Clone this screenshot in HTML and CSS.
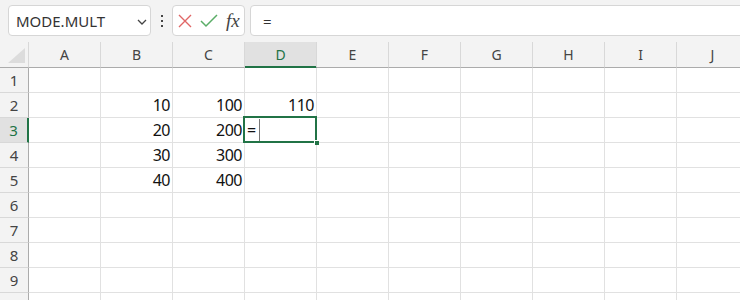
FILE: index.html
```html
<!DOCTYPE html>
<html lang="en">
  <head>
    <meta charset="UTF-8" />
    <title>Sheet</title>
    <link rel="stylesheet" href="styles.css">
  </head>
  <body>
    <div class="toolbar">
      <div class="namebox">
        <span>MODE.MULT</span>
        <svg class="chev" width="10" height="6" viewBox="0 0 10 6">
          <polyline points="1,1 5,5 9,1" fill="none" stroke="#444" stroke-width="1.3" />
        </svg>
      </div>
      <div class="dots">
        <svg width="4" height="12" viewBox="0 0 4 12">
          <rect x="1" y="0" width="2" height="2" fill="#444" />
          <rect x="1" y="5" width="2" height="2" fill="#444" />
          <rect x="1" y="10" width="2" height="2" fill="#444" />
        </svg>
      </div>
      <div class="fxbox">
        <svg width="14" height="14" viewBox="0 0 14 14">
          <path d="M1 1 L13 13 M13 1 L1 13" stroke="#e06666" stroke-width="1.4" fill="none" />
        </svg>
        <svg width="18" height="14" viewBox="0 0 18 14">
          <polyline points="1,7 6,12 17,1" stroke="#5aad67" stroke-width="1.5" fill="none" />
        </svg>
        <span class="fx">fx</span>
      </div>
      <div class="formula">=</div>
    </div>

    <div class="sheet">
      <div class="row head">
        <div class="corner"></div>
        <div class="ch">A</div>
        <div class="ch">B</div>
        <div class="ch">C</div>
        <div class="ch sel">D</div>
        <div class="ch">E</div>
        <div class="ch">F</div>
        <div class="ch">G</div>
        <div class="ch">H</div>
        <div class="ch">I</div>
        <div class="ch">J</div>
      </div>
      <div class="row">
        <div class="rh">1</div>
        <div class="c"></div><div class="c"></div><div class="c"></div><div class="c"></div><div class="c"></div>
        <div class="c"></div><div class="c"></div><div class="c"></div><div class="c"></div><div class="c"></div>
      </div>
      <div class="row">
        <div class="rh">2</div>
        <div class="c"></div><div class="c">10</div><div class="c">100</div><div class="c">110</div><div class="c"></div>
        <div class="c"></div><div class="c"></div><div class="c"></div><div class="c"></div><div class="c"></div>
      </div>
      <div class="row">
        <div class="rh sel">3</div>
        <div class="c"></div><div class="c">20</div><div class="c">200</div>
        <div class="c active"><span class="edit">=</span><span class="caret"></span><span class="handle"></span></div>
        <div class="c"></div>
        <div class="c"></div><div class="c"></div><div class="c"></div><div class="c"></div><div class="c"></div>
      </div>
      <div class="row">
        <div class="rh">4</div>
        <div class="c"></div><div class="c">30</div><div class="c">300</div><div class="c"></div><div class="c"></div>
        <div class="c"></div><div class="c"></div><div class="c"></div><div class="c"></div><div class="c"></div>
      </div>
      <div class="row">
        <div class="rh">5</div>
        <div class="c"></div><div class="c">40</div><div class="c">400</div><div class="c"></div><div class="c"></div>
        <div class="c"></div><div class="c"></div><div class="c"></div><div class="c"></div><div class="c"></div>
      </div>
      <div class="row">
        <div class="rh">6</div>
        <div class="c"></div><div class="c"></div><div class="c"></div><div class="c"></div><div class="c"></div>
        <div class="c"></div><div class="c"></div><div class="c"></div><div class="c"></div><div class="c"></div>
      </div>
      <div class="row">
        <div class="rh">7</div>
        <div class="c"></div><div class="c"></div><div class="c"></div><div class="c"></div><div class="c"></div>
        <div class="c"></div><div class="c"></div><div class="c"></div><div class="c"></div><div class="c"></div>
      </div>
      <div class="row">
        <div class="rh">8</div>
        <div class="c"></div><div class="c"></div><div class="c"></div><div class="c"></div><div class="c"></div>
        <div class="c"></div><div class="c"></div><div class="c"></div><div class="c"></div><div class="c"></div>
      </div>
      <div class="row">
        <div class="rh">9</div>
        <div class="c"></div><div class="c"></div><div class="c"></div><div class="c"></div><div class="c"></div>
        <div class="c"></div><div class="c"></div><div class="c"></div><div class="c"></div><div class="c"></div>
      </div>
      <div class="row">
        <div class="rh">10</div>
        <div class="c"></div><div class="c"></div><div class="c"></div><div class="c"></div><div class="c"></div>
        <div class="c"></div><div class="c"></div><div class="c"></div><div class="c"></div><div class="c"></div>
      </div>
    </div>
  </body>
</html>
```

FILE: styles.css
```css
body {
  margin: 0;
  padding: 0;
  width: 740px;
  height: 300px;
  overflow: hidden;
  background-color: #f3f3f3;
  font-family: "Noto Sans", sans-serif;
  color: #222;
}

.toolbar {
  display: flex;
  align-items: flex-start;
  height: 42px;
  padding: 5px 0 0 8px;
  box-sizing: border-box;
}

.namebox {
  width: 143px;
  height: 31px;
  box-sizing: border-box;
  background-color: white;
  border: 1px solid #d6d6d6;
  border-radius: 4px;
  display: flex;
  align-items: center;
  justify-content: space-between;
  padding: 0 3px 0 7px;
  font-size: 15px;
  color: #333;
}

.chev {
  margin-top: 3px;
}

.dots {
  width: 21px;
  height: 31px;
  display: flex;
  align-items: center;
  justify-content: center;
}

.fxbox {
  width: 73px;
  height: 31px;
  box-sizing: border-box;
  background-color: white;
  border: 1px solid #d6d6d6;
  border-radius: 4px;
  display: flex;
  align-items: center;
  padding: 0 0 0 5px;
  gap: 8px;
}

.fx {
  font-family: "Liberation Serif", serif;
  font-style: italic;
  font-size: 19px;
  color: #444;
  margin-left: 0;
}

.formula {
  flex: 1;
  height: 31px;
  box-sizing: border-box;
  margin-left: 5px;
  margin-right: -10px;
  background-color: white;
  border: 1px solid #d6d6d6;
  border-radius: 4px 0 0 4px;
  display: flex;
  align-items: center;
  padding-left: 12px;
  font-size: 15px;
  color: #333;
}

.sheet {
  background-color: white;
}

.row {
  display: flex;
  height: 25px;
}

.row.head {
  height: 26px;
  background-color: #f3f3f3;
}

.corner {
  width: 29px;
  flex: none;
  box-sizing: border-box;
  border-right: 1px solid #d8d8d8;
  border-bottom: 1px solid #ababab;
  position: relative;
}

.corner::after {
  content: "";
  position: absolute;
  left: 8px;
  top: 6px;
  width: 17px;
  height: 15px;
  background-color: #dcdcdc;
  clip-path: polygon(100% 0, 100% 100%, 0 100%);
}

.ch {
  width: 72px;
  flex: none;
  box-sizing: border-box;
  border-right: 1px solid #d8d8d8;
  border-bottom: 1px solid #ababab;
  display: flex;
  align-items: center;
  justify-content: center;
  font-size: 14px;
  color: #444;
}

.ch.sel {
  background-color: #e1e1e1;
  color: #217346;
  box-shadow: inset 0 -1px 0 #217346;
  border-bottom-color: #217346;
}

.rh {
  width: 29px;
  flex: none;
  box-sizing: border-box;
  background-color: #f3f3f3;
  border-right: 1px solid #ababab;
  border-bottom: 1px solid #d8d8d8;
  display: flex;
  align-items: center;
  justify-content: center;
  font-size: 15px;
  letter-spacing: -0.3px;
  color: #444;
}

.rh.sel {
  background-color: #e1e1e1;
  color: #217346;
  border-right: 2px solid #217346;
}

.c {
  width: 72px;
  flex: none;
  box-sizing: border-box;
  border-right: 1px solid #e1e1e1;
  border-bottom: 1px solid #e1e1e1;
  display: flex;
  align-items: center;
  justify-content: flex-end;
  padding-right: 2px;
  font-size: 16px;
  letter-spacing: -0.5px;
  color: #111;
}

.c.active {
  position: relative;
  justify-content: flex-start;
  padding-left: 2px;
}

.c.active::after {
  content: "";
  position: absolute;
  left: -2px;
  top: -2px;
  right: -1px;
  bottom: -1px;
  border: 2px solid #217346;
}

.caret {
  width: 1px;
  height: 23px;
  background-color: #777;
  margin-left: 3px;
}

.handle {
  position: absolute;
  right: -3px;
  bottom: -3px;
  width: 4px;
  height: 4px;
  background-color: #217346;
  border: 1px solid white;
  border-right: none;
  border-bottom: none;
  z-index: 1;
}
```
